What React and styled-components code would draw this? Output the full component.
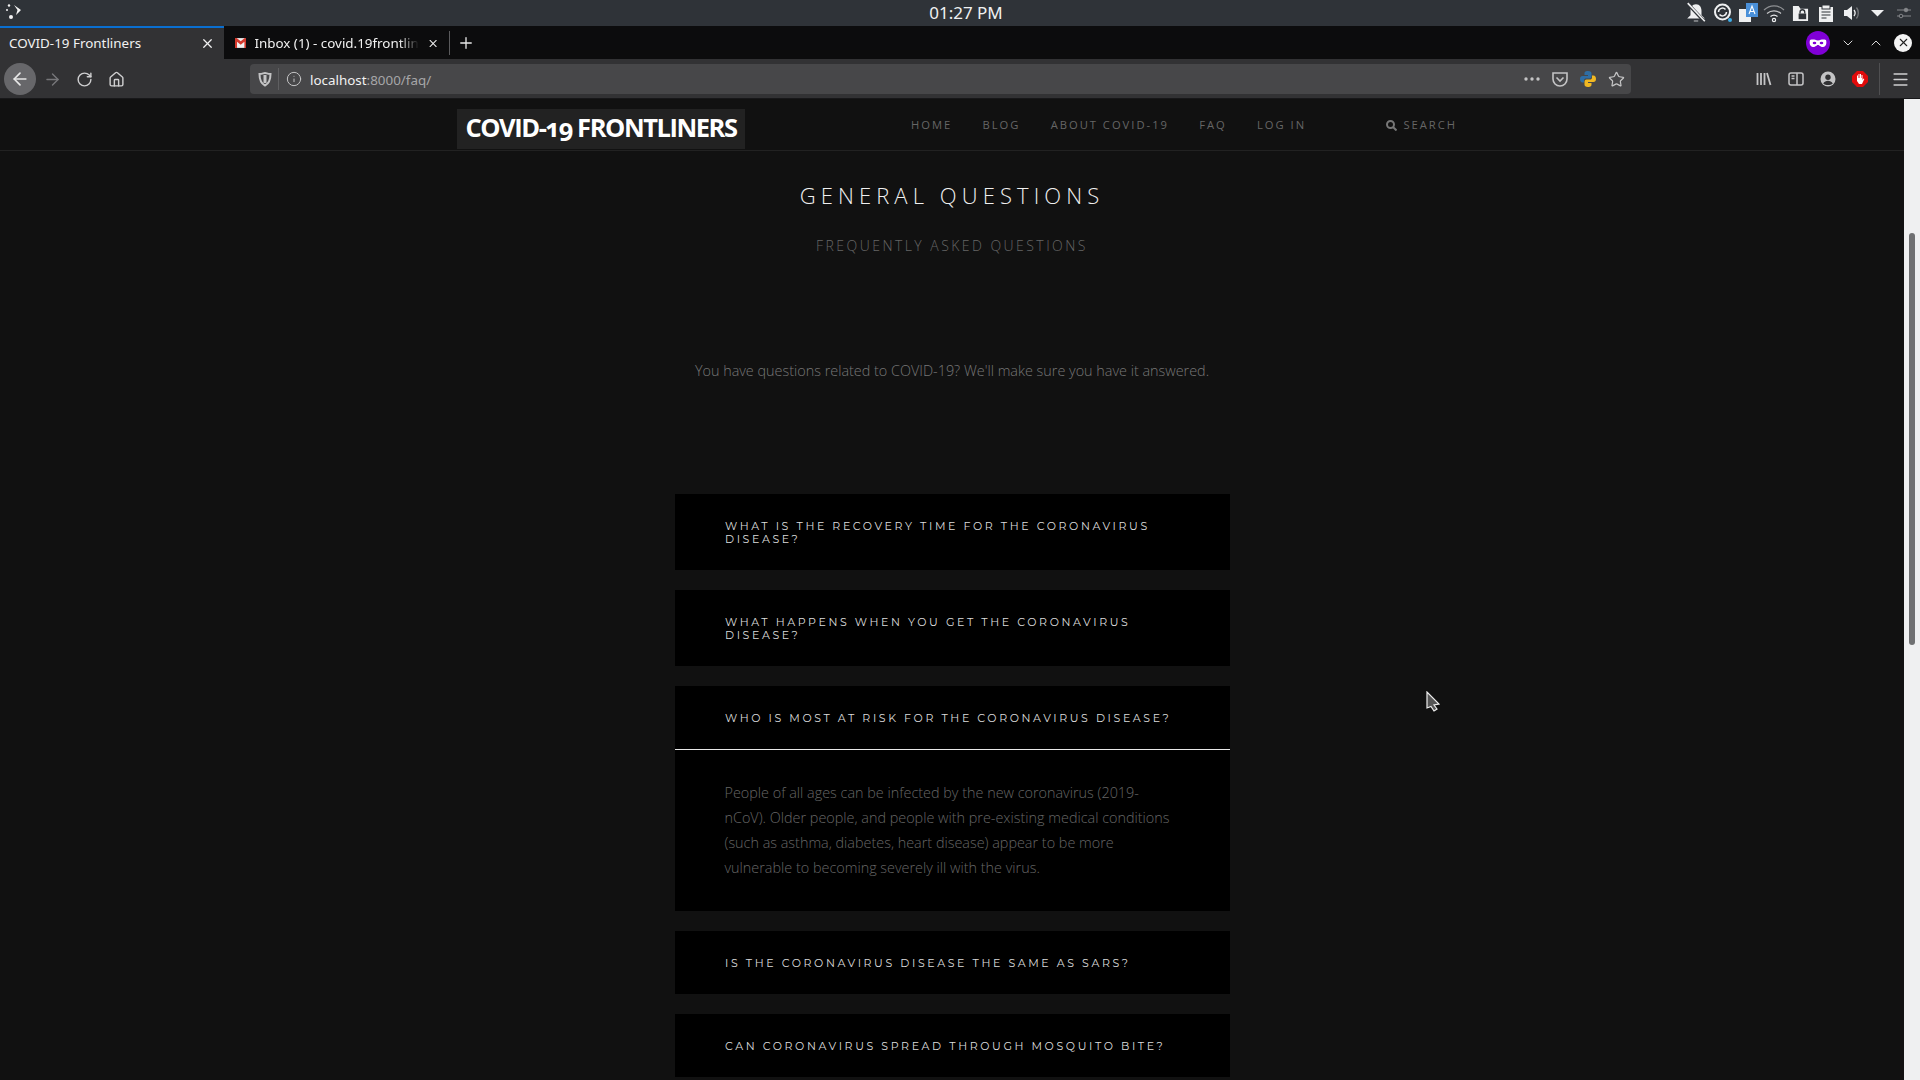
import styled, { createGlobalStyle } from "styled-components";
import {
  ArrowLeft,
  ArrowRight,
  RotateCw,
  Home,
  Info,
  Star,
  X,
  Plus,
  ChevronDown,
  ChevronUp,
  Menu,
} from "lucide-react";

const GlobalStyle = createGlobalStyle`
  html, body {
    margin: 0;
    padding: 0;
    background: #111;
    overflow: hidden;
  }
  * {
    box-sizing: border-box;
  }
`;

const Screen = styled.div`
  position: relative;
  width: 1920px;
  height: 1080px;
  display: flex;
  flex-direction: column;
  overflow: hidden;
  font-family: "Open Sans", "Noto Sans", sans-serif;
`;

const SystemBar = styled.div`
  height: 26px;
  flex: none;
  display: grid;
  grid-template-columns: 1fr auto 1fr;
  align-items: center;
  background: #2f3338;
  padding: 0 3px 0 5px;
`;

const Clock = styled.div`
  font-size: 17px;
  line-height: 26px;
  padding-left: 10px;
  color: #eff0f1;
  font-family: "Noto Sans", sans-serif;
`;

const Tray = styled.div`
  display: flex;
  justify-content: flex-end;
`;

const TraySlot = styled.div`
  width: 26px;
  height: 26px;
  display: flex;
  align-items: center;
  justify-content: center;
`;

const TabBar = styled.div`
  height: 33px;
  flex: none;
  display: flex;
  align-items: stretch;
  background: #0c0c0d;
`;

const Tab = styled.div`
  width: 224px;
  display: flex;
  align-items: center;
  padding: 0 9px 1px ${(p) => (p.$active ? "9px" : "11px")};
  gap: 8px;
  font-size: 13.4px;
  color: #f1f1f1;
  font-family: "Noto Sans", sans-serif;
  background: ${(p) => (p.$active ? "#323234" : "transparent")};
  border-top: 2px solid ${(p) => (p.$active ? "#0a6fd0" : "transparent")};
`;

const TabTitle = styled.span`
  flex: 1;
  white-space: nowrap;
  ${(p) =>
    p.$fade &&
    `mask-image: linear-gradient(to right, #000 88%, transparent 100%);`}
`;

const TabSeparator = styled.div`
  width: 1px;
  height: 24px;
  align-self: center;
  margin-left: 1px;
  background: #5a5a5c;
`;

const NewTab = styled.div`
  width: 32px;
  display: flex;
  align-items: center;
  justify-content: center;
  color: #e8e8e8;
`;

const WindowControls = styled.div`
  margin-left: auto;
  display: flex;
  align-items: center;
  color: #d8d8d8;
`;

const ControlSlot = styled.div`
  width: ${(p) => p.$w || 28}px;
  display: flex;
  justify-content: center;
`;

const CloseCircle = styled.div`
  width: 18px;
  height: 18px;
  border-radius: 50%;
  background: #f4f4f4;
  color: #222;
  display: flex;
  align-items: center;
  justify-content: center;
`;

const NavBar = styled.div`
  height: 40px;
  flex: none;
  display: flex;
  align-items: center;
  background: #323234;
  padding: 1px 0 0 4px;
  border-bottom: 1px solid #18181a;
`;

const NavButton = styled.div`
  width: 32px;
  height: 32px;
  border-radius: 50%;
  display: flex;
  align-items: center;
  justify-content: center;
  color: ${(p) => (p.$dim ? "#77777a" : "#cfcfd0")};
  background: ${(p) => (p.$round ? "#67676a" : "transparent")};
`;

const UrlBox = styled.div`
  width: 1381px;
  height: 30px;
  margin: 0 117px 0 118px;
  display: flex;
  align-items: center;
  background: #474749;
  border-radius: 4px;
  padding: 0 1px 0 8px;
  color: #c4c4c5;
`;

const UrlDivider = styled.div`
  width: 1px;
  height: 22px;
  margin: 0 7px 0 6px;
  background: #5f5f61;
`;

const UrlText = styled.div`
  margin-left: 8px;
  padding-top: 1px;
  flex: 1;
  font-size: 13.4px;
  color: #f2f2f2;
  font-family: "Noto Sans", sans-serif;
  span {
    color: #a6a6a8;
  }
`;

const UrlAction = styled.div`
  width: 28px;
  display: flex;
  justify-content: center;
  align-items: center;
`;

const ToolSeparator = styled.div`
  width: 1px;
  height: 32px;
  margin: 0 4px 0 3px;
  background: #4f4f51;
`;

const Viewport = styled.div`
  flex: 1;
  min-height: 0;
  display: flex;
`;

const Page = styled.div`
  flex: 1;
  background: #111;
`;

const Scrollbar = styled.div`
  width: 16px;
  flex: none;
  background: #eff0f1;
  padding: 134px 5px 0;
`;

const ScrollThumb = styled.div`
  height: 412px;
  background: #6f7072;
  border-radius: 3px;
`;

const SiteHeader = styled.header`
  height: 52px;
  display: flex;
  align-items: flex-start;
  padding: 10px 0 0 457px;
  border-bottom: 1px solid #222;
`;

const Logo = styled.div`
  width: 288px;
  height: 40px;
  background: #222;
  color: #fff;
  font-size: 25.5px;
  font-weight: 700;
  line-height: 36px;
  text-align: center;
  letter-spacing: -1.45px;
  white-space: nowrap;
  font-variant-numeric: oldstyle-nums;
`;

const SiteNav = styled.nav`
  display: flex;
  gap: 30.25px;
  margin: 8px 0 0 166px;
`;

const SiteLink = styled.a`
  font-size: 11.2px;
  letter-spacing: 2px;
  line-height: 16px;
  color: #666;
  text-transform: uppercase;
`;

const SearchLink = styled(SiteLink)`
  display: flex;
  align-items: center;
  gap: 6px;
  margin-left: 50px;
`;

const SearchGlyph = styled.svg`
  flex: none;
`;

const Title = styled.h1`
  margin: 29px 0 0;
  font-size: 22px;
  font-weight: 300;
  line-height: 30px;
  letter-spacing: 5.1px;
  color: #f0f0f0;
  text-align: center;
`;

const Subtitle = styled.h2`
  margin: 26px 0 0;
  font-size: 14px;
  font-weight: 300;
  line-height: 20px;
  letter-spacing: 2.45px;
  color: #666;
  text-align: center;
`;

const Lead = styled.p`
  margin: 105px 0 0;
  font-size: 14.4px;
  font-weight: 300;
  line-height: 20px;
  color: #777;
  text-align: center;
`;

const FaqList = styled.div`
  width: 555px;
  margin: 113px 0 0 675px;
  display: flex;
  flex-direction: column;
  gap: 20px;
`;

const FaqCard = styled.div`
  background: #000;
`;

const Question = styled.div`
  padding: 26px 49px 24px 50px;
  font-family: "Montserrat", "Inter", sans-serif;
  font-size: 11px;
  font-weight: 400;
  line-height: 13px;
  letter-spacing: 2.6px;
  color: #dcdcdc;
  border-bottom: ${(p) => (p.$open ? "1px solid #e8e8e8" : "0")};
`;

const Answer = styled.div`
  padding: 30px 55px 31px 49.5px;
  font-size: 14.4px;
  font-weight: 300;
  line-height: 25px;
  color: #666;
`;

const CursorMark = styled.svg`
  position: absolute;
  left: 1426px;
  top: 691px;
`;

const BellOff = () => (
  <svg width="22" height="22" viewBox="0 0 20 20">
    <path d="M10 2c-3.500 0-5 3-5 6v4l-3 3h16l-3-3V8c0-3-1.500-6-5-6z" fill="#eff0f1" />
    <path d="M8 16.500h4v1.500H8z" fill="#8a8c8f" />
    <path d="M2 1l16 17" stroke="#2f3338" strokeWidth="3" />
    <path d="M2.500 1l15.500 16.500" stroke="#eff0f1" strokeWidth="1.500" />
  </svg>
);

const SyncBadge = () => (
  <svg width="20" height="20" viewBox="0 0 20 20">
    <circle cx="10.500" cy="9" r="7.500" fill="none" stroke="#eff0f1" strokeWidth="2" />
    <path d="M6.500 9a4 4 0 0 1 7-2.500M14.500 9a4 4 0 0 1-7 2.500" fill="none" stroke="#eff0f1" strokeWidth="1.500" />
    <circle cx="18" cy="17" r="2" fill="#3daee9" />
  </svg>
);

const TranslateBadge = () => (
  <svg width="20" height="20" viewBox="0 0 20 20">
    <rect x="1" y="6" width="12" height="13" fill="#eff0f1" />
    <rect x="8" y="0" width="12" height="14" fill="#4a90d9" />
    <path d="M11 11l3-8 3 8M12 8.500h4" fill="none" stroke="#fff" strokeWidth="1.100" />
  </svg>
);

const WifiMark = () => (
  <svg width="22" height="20" viewBox="0 0 22 20" fill="none">
    <path d="M1 7c6-5.500 14-5.500 20 0" stroke="#8e9093" strokeWidth="1.200" />
    <path d="M4 10.500c4-3.500 10-3.500 14 0" stroke="#c6c7c9" strokeWidth="1.200" />
    <path d="M7.500 13.500c2-1.600 5-1.600 7 0" stroke="#eff0f1" strokeWidth="1.200" />
    <circle cx="11" cy="17" r="1.600" stroke="#eff0f1" strokeWidth="1.200" />
  </svg>
);

const ClipLock = () => (
  <svg width="17" height="17" viewBox="0 0 18 18">
    <path d="M1 1h6l2 3h8v13H1z" fill="#eff0f1" />
    <rect x="7" y="9" width="8" height="6" fill="#2f3338" />
    <path d="M8.500 9V7.500a2.500 2.500 0 0 1 5 0V9" fill="none" stroke="#2f3338" strokeWidth="1.400" />
  </svg>
);

const ClipBoard = () => (
  <svg width="16" height="18" viewBox="0 0 16 18">
    <path d="M1 3h14v15H1z" fill="#eff0f1" />
    <rect x="4" y="1" width="8" height="4" fill="#eff0f1" stroke="#2f3338" />
    <path d="M3.500 8h9M3.500 11h9M3.500 14h5" stroke="#2f3338" strokeWidth="1.200" />
  </svg>
);

const Speaker = () => (
  <svg width="18" height="18" viewBox="0 0 18 18" fill="none">
    <path d="M1 6h3l5-4v14l-5-4H1z" fill="#eff0f1" />
    <path d="M11 6c1.200 1.600 1.200 4.400 0 6" stroke="#eff0f1" strokeWidth="1.300" />
    <path d="M13.500 3.500c2.400 3 2.400 8 0 11" stroke="#77797c" strokeWidth="1.300" />
  </svg>
);

const Caret = () => (
  <svg width="14" height="8" viewBox="0 0 14 8">
    <path d="M0 1h13L6.500 7.500z" fill="#eff0f1" />
  </svg>
);

const Sliders = () => (
  <svg width="14" height="12" viewBox="0 0 14 12" fill="none" stroke="#85878a">
    <path d="M0 3h14M0 9h14" />
    <circle cx="9" cy="3" r="1.800" fill="#85878a" />
    <circle cx="4" cy="9" r="1.800" fill="#2f3338" />
  </svg>
);

const Spinner = () => (
  <svg width="18" height="20" viewBox="0 0 18 20">
    <path d="M9 2l7 5-5 5 1.500-5z" fill="#f4f4f4" />
    <circle cx="4" cy="2.500" r="1.200" fill="#f4f4f4" />
    <circle cx="2" cy="7" r="1" fill="#f4f4f4" />
    <circle cx="6" cy="14" r="2" fill="#f4f4f4" />
  </svg>
);

const GmailIcon = () => (
  <svg width="14" height="12" viewBox="0 0 14 12">
    <rect width="14" height="12" fill="#f1f1f1" />
    <path d="M0 0h2l5 4 5-4h2v12h-2.500V4.500L7 8 2.500 4.500V12H0z" fill="#d4392d" />
  </svg>
);

const MaskBadge = () => (
  <svg width="24" height="24" viewBox="0 0 24 24">
    <circle cx="12" cy="12" r="12" fill="#8000d7" />
    <path
      d="M4 9c3-1 5-.3 8 .6 3-.9 5-1.600 8-.6 1 3 0 7-3 7-3 0-3.500-2-5-2s-2 2-5 2c-3 0-4-4-3-7z"
      fill="#fff"
    />
    <ellipse cx="8.500" cy="12" rx="1.800" ry="1.200" fill="#8000d7" />
    <ellipse cx="15.500" cy="12" rx="1.800" ry="1.200" fill="#8000d7" />
  </svg>
);

const ShieldIcon = () => (
  <svg width="14" height="16" viewBox="0 0 14 16" fill="none" stroke="#c4c4c5" strokeWidth="2">
    <path d="M1.500 3c3 0 4-1 5.500-1s2.500 1 5.500 1c0 6-1.500 9.500-5.500 11.500C3 12.500 1.500 9 1.500 3z" />
    <path d="M7 4v8" strokeWidth="3" />
  </svg>
);

const PocketIcon = () => (
  <svg width="16" height="16" viewBox="0 0 16 16" fill="none" stroke="#c4c4c5" strokeWidth="1.600">
    <path d="M1 2h14v6a7 7 0 0 1-14 0z" />
    <path d="M4.500 6.500L8 10l3.500-3.500" />
  </svg>
);

const PythonIcon = () => (
  <svg width="16" height="16" viewBox="0 0 16 16">
    <path d="M8 0C5 0 4.500 1.200 4.500 2.500V4H8v1H2.500C1 5 0 6 0 8s1 3.500 2.500 3.500H4V9.500C4 8 5 7.500 6 7.500h3.500c1 0 2-.8 2-2v-3C11.500 1 10.500 0 8 0z" fill="#2f6ea5" />
    <path d="M8 16c3 0 3.500-1.200 3.500-2.500V12H8v-1h5.500c1.500 0 2.500-1 2.500-3s-1-3.500-2.500-3.500H12v2c0 1.500-1 2-2 2H6.500c-1 0-2 .8-2 2v3C4.500 15 5.500 16 8 16z" fill="#f0b823" />
  </svg>
);

const LibraryIcon = () => (
  <svg width="16" height="16" viewBox="0 0 16 16" stroke="#c4c4c5" strokeWidth="1.800" fill="none">
    <path d="M1.500 2v12M5 2v12M8.500 2v12M11 2l3.500 12" />
  </svg>
);

const SidebarIcon = () => (
  <svg width="16" height="16" viewBox="0 0 16 16" stroke="#c4c4c5" strokeWidth="1.500" fill="none">
    <rect x="1" y="2" width="14" height="12" rx="2" />
    <path d="M9 2v12M3.500 5h3M3.500 7.500h3" />
  </svg>
);

const AccountIcon = () => (
  <svg width="16" height="16" viewBox="0 0 16 16">
    <circle cx="8" cy="8" r="7.500" fill="#c4c4c5" />
    <circle cx="8" cy="6.300" r="2.700" fill="#323234" />
    <path d="M3.200 12.500c1-2 3-2.800 4.800-2.800s3.800.8 4.800 2.800C11.500 13.700 9.800 14 8 14s-3.500-.3-4.800-1.500z" fill="#323234" />
  </svg>
);

const UBlockIcon = () => (
  <svg width="16" height="16" viewBox="0 0 16 16">
    <path d="M5 0h6l5 5v6l-5 5H5l-5-5V5z" fill="#e00b0b" />
    <path d="M5 8V4.500h1V7h.5V3h1v4H8V3h1v4h.5V4h1v5l1-1.500.8.500L10 13H7L5 10z" fill="#fff" />
  </svg>
);

const questionsBefore = [
  "WHAT IS THE RECOVERY TIME FOR THE CORONAVIRUS DISEASE?",
  "WHAT HAPPENS WHEN YOU GET THE CORONAVIRUS DISEASE?",
];

const questionsAfter = [
  "IS THE CORONAVIRUS DISEASE THE SAME AS SARS?",
  "CAN CORONAVIRUS SPREAD THROUGH MOSQUITO BITE?",
];

export default function App() {
  return (
    <Screen>
      <GlobalStyle />
      <SystemBar>
        <Spinner />
        <Clock>01:27 PM</Clock>
        <Tray>
          <TraySlot><BellOff /></TraySlot>
          <TraySlot><SyncBadge /></TraySlot>
          <TraySlot><TranslateBadge /></TraySlot>
          <TraySlot><WifiMark /></TraySlot>
          <TraySlot><ClipLock /></TraySlot>
          <TraySlot><ClipBoard /></TraySlot>
          <TraySlot><Speaker /></TraySlot>
          <TraySlot><Caret /></TraySlot>
          <TraySlot><Sliders /></TraySlot>
        </Tray>
      </SystemBar>

      <TabBar>
        <Tab $active>
          <TabTitle>COVID-19 Frontliners</TabTitle>
          <X size={15} strokeWidth={2} />
        </Tab>
        <Tab>
          <GmailIcon />
          <TabTitle $fade>Inbox (1) - covid.19frontlin</TabTitle>
          <X size={15} strokeWidth={2} />
        </Tab>
        <TabSeparator />
        <NewTab>
          <Plus size={18} strokeWidth={1.75} />
        </NewTab>
        <WindowControls>
          <ControlSlot $w={24}><MaskBadge /></ControlSlot>
          <ControlSlot $w={36}><ChevronDown size={16} strokeWidth={1.5} /></ControlSlot>
          <ControlSlot $w={20}><ChevronUp size={16} strokeWidth={1.5} /></ControlSlot>
          <ControlSlot $w={34}>
            <CloseCircle><X size={13} strokeWidth={2} /></CloseCircle>
          </ControlSlot>
        </WindowControls>
      </TabBar>

      <NavBar>
        <NavButton $round><ArrowLeft size={20} strokeWidth={2} color="#e8e8e8" /></NavButton>
        <NavButton $dim><ArrowRight size={19} strokeWidth={1.75} /></NavButton>
        <NavButton><RotateCw size={17} strokeWidth={2} /></NavButton>
        <NavButton><Home size={17} strokeWidth={2} /></NavButton>
        <UrlBox>
          <ShieldIcon />
          <UrlDivider />
          <Info size={16} strokeWidth={1.5} />
          <UrlText>localhost<span>:8000/faq/</span></UrlText>
          <UrlAction>
            <svg width="16" height="4" viewBox="0 0 16 4" fill="#c4c4c5">
              <circle cx="2" cy="2" r="1.700" />
              <circle cx="8" cy="2" r="1.700" />
              <circle cx="14" cy="2" r="1.700" />
            </svg>
          </UrlAction>
          <UrlAction><PocketIcon /></UrlAction>
          <UrlAction><PythonIcon /></UrlAction>
          <UrlAction><Star size={17} strokeWidth={1.75} /></UrlAction>
        </UrlBox>
        <NavButton><LibraryIcon /></NavButton>
        <NavButton><SidebarIcon /></NavButton>
        <NavButton><AccountIcon /></NavButton>
        <NavButton><UBlockIcon /></NavButton>
        <ToolSeparator />
        <NavButton><Menu size={19} strokeWidth={2} /></NavButton>
      </NavBar>

      <Viewport>
        <Page>
          <SiteHeader>
            <Logo>COVID-19 FRONTLINERS</Logo>
            <SiteNav>
              <SiteLink>Home</SiteLink>
              <SiteLink>Blog</SiteLink>
              <SiteLink>About COVID-19</SiteLink>
              <SiteLink>FAQ</SiteLink>
              <SiteLink>Log in</SiteLink>
              <SearchLink>
                <SearchGlyph width="11" height="11" viewBox="0 0 11 11" fill="none" stroke="#777" strokeWidth="2">
                  <circle cx="4.500" cy="4.500" r="3.500" />
                  <path d="M7 7l3.500 3.500" />
                </SearchGlyph>
                Search
              </SearchLink>
            </SiteNav>
          </SiteHeader>
          <Title>GENERAL QUESTIONS</Title>
          <Subtitle>FREQUENTLY ASKED QUESTIONS</Subtitle>
          <Lead>You have questions related to COVID-19? We'll make sure you have it answered.</Lead>
          <FaqList>
            {questionsBefore.map((text) => (
              <FaqCard key={text}>
                <Question>{text}</Question>
              </FaqCard>
            ))}
            <FaqCard>
              <Question $open>WHO IS MOST AT RISK FOR THE CORONAVIRUS DISEASE?</Question>
              <Answer>
                People of all ages can be infected by the new coronavirus (2019-nCoV). Older people,
                and people with pre-existing medical conditions (such as asthma, diabetes, heart
                disease) appear to be more vulnerable to becoming severely ill with the virus.
              </Answer>
            </FaqCard>
            {questionsAfter.map((text) => (
              <FaqCard key={text}>
                <Question>{text}</Question>
              </FaqCard>
            ))}
          </FaqList>
        </Page>
        <Scrollbar>
          <ScrollThumb />
        </Scrollbar>
      </Viewport>

      <CursorMark width="14" height="22" viewBox="0 0 14 22">
        <path d="M1 1v16l4-1.500 3 4.500 3-2-3-4 5-1z" fill="#555" stroke="#eee" strokeWidth="1.200" />
      </CursorMark>
    </Screen>
  );
}
